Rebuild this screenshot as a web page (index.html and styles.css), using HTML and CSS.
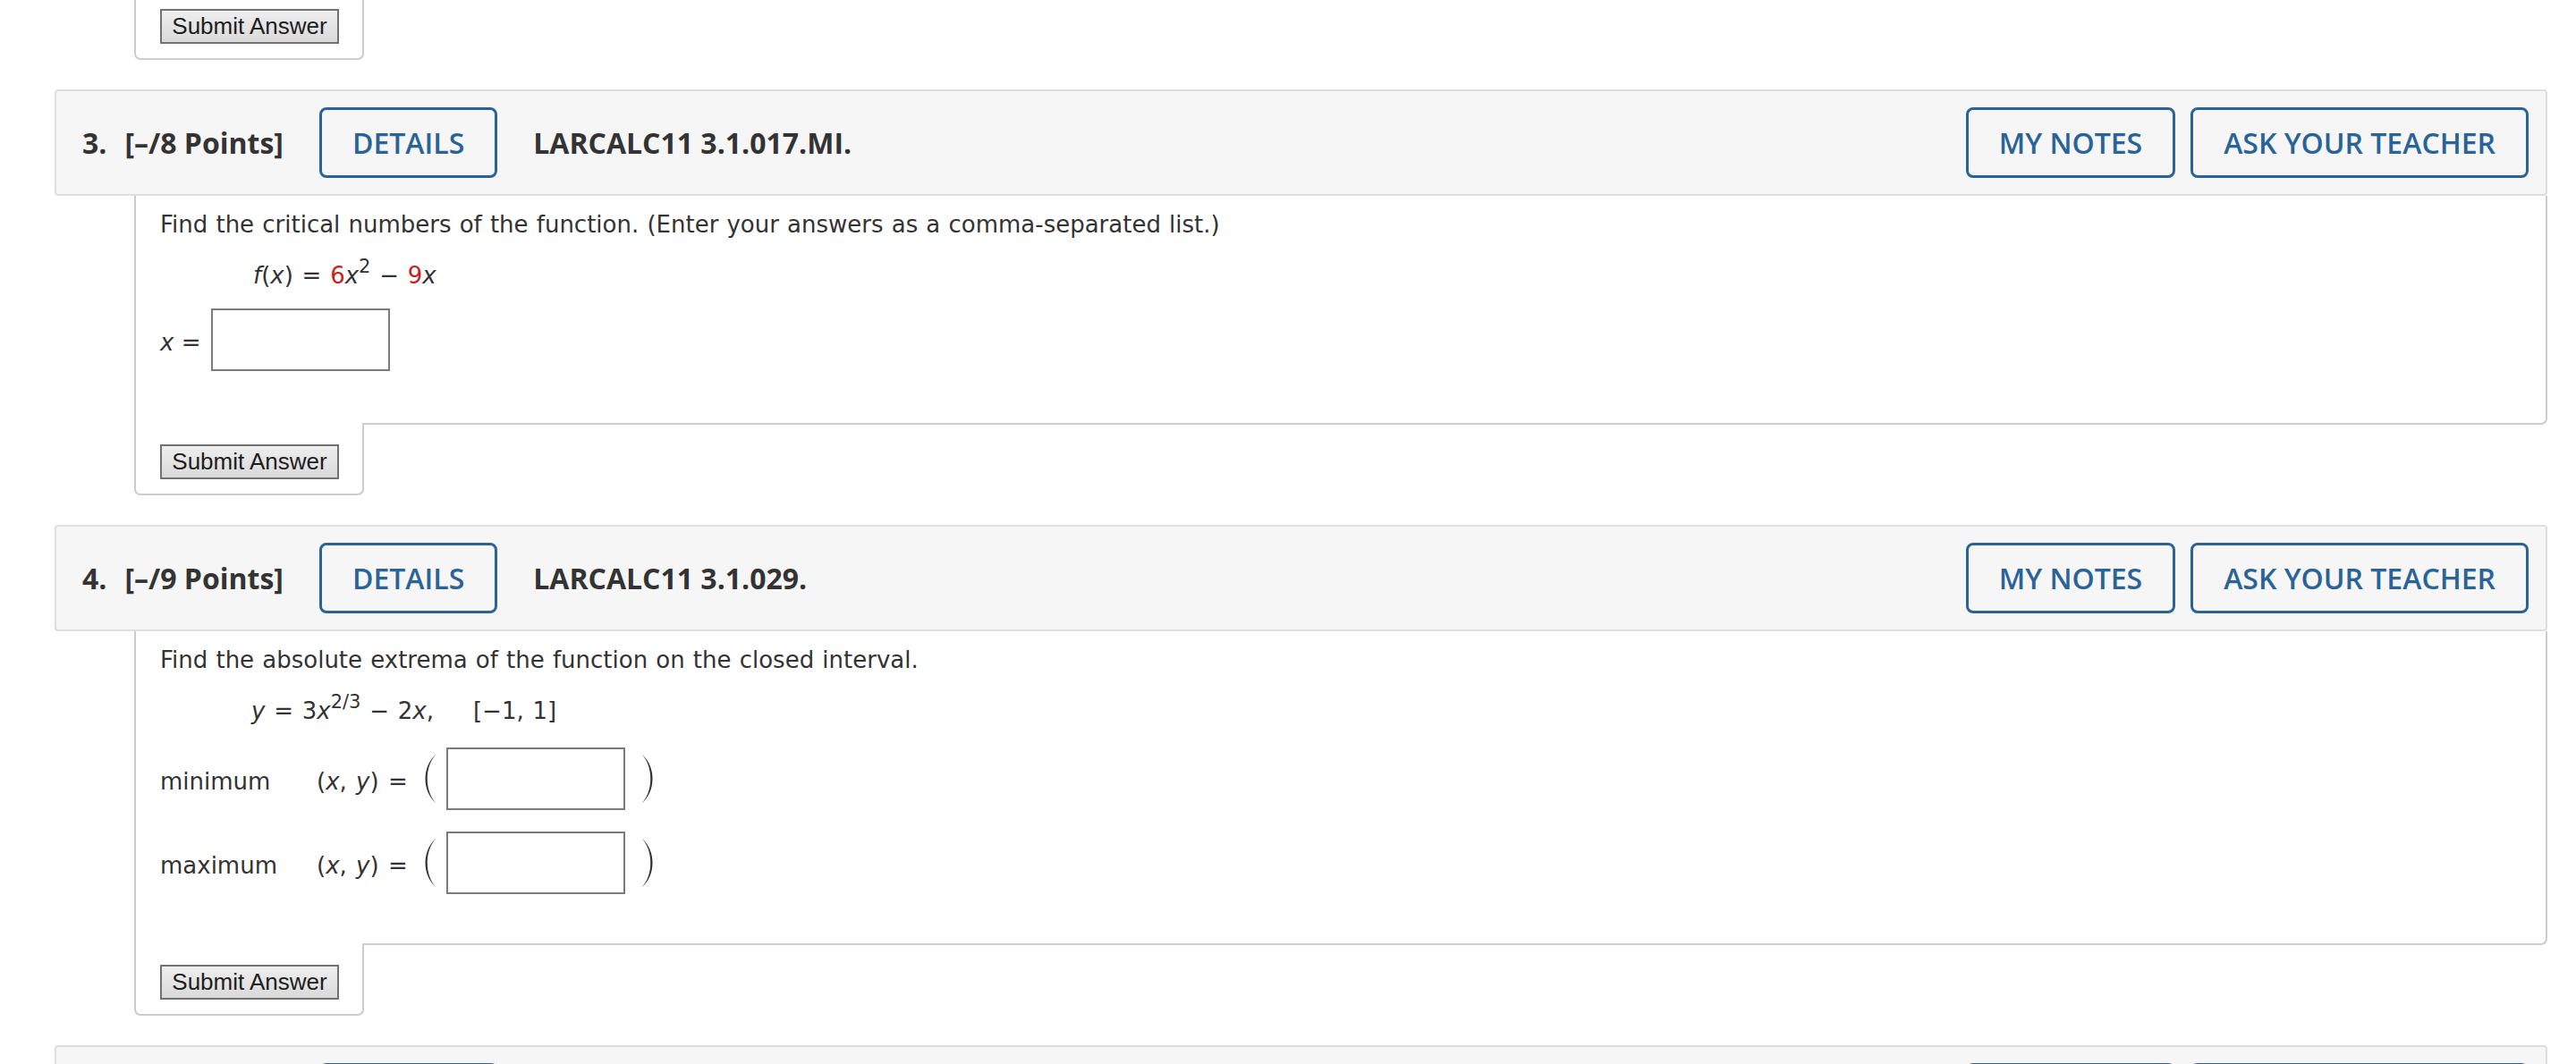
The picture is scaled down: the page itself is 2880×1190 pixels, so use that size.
FILE: index.html
```html
<!DOCTYPE html>
<html lang="en">
<head>
<meta charset="utf-8">
<title>WebAssign</title>
<link rel="stylesheet" href="styles.css">
</head>
<body>
<main class="page">
  <div class="tab tab-first"><button class="submit" type="button">Submit Answer</button></div>

  <section class="question">
    <div class="qhead">
      <span class="qnum">3.</span>
      <span class="qpts">[–/8 Points]</span>
      <button class="btn btn-details" type="button">DETAILS</button>
      <span class="qid">LARCALC11 3.1.017.MI.</span>
      <span class="spacer"></span>
      <button class="btn" type="button">MY NOTES</button>
      <button class="btn" type="button">ASK YOUR TEACHER</button>
    </div>
    <div class="qbody">
      <p class="prompt">Find the critical numbers of the function. (Enter your answers as a comma-separated list.)</p>
      <p class="formula"><i>f</i>(<i>x</i>) = <span class="red">6</span><i>x</i><sup>2</sup> − <span class="red">9</span><i>x</i></p>
      <div class="answer-row">
        <span class="lbl"><i>x</i> =</span>
        <input class="ans" type="text" aria-label="x">
      </div>
    </div>
    <div class="tab"><button class="submit" type="button">Submit Answer</button></div>
  </section>

  <section class="question">
    <div class="qhead">
      <span class="qnum">4.</span>
      <span class="qpts">[–/9 Points]</span>
      <button class="btn btn-details" type="button">DETAILS</button>
      <span class="qid">LARCALC11 3.1.029.</span>
      <span class="spacer"></span>
      <button class="btn" type="button">MY NOTES</button>
      <button class="btn" type="button">ASK YOUR TEACHER</button>
    </div>
    <div class="qbody qbody-short">
      <p class="prompt">Find the absolute extrema of the function on the closed interval.</p>
      <p class="formula formula-wide"><i>y</i> = 3<i>x</i><sup>2/3</sup> − 2<i>x</i>,<span class="interval">[−1, 1]</span></p>
      <div class="pairs">
        <div class="pair">
          <span class="pair-name">minimum</span>
          <span class="pair-xy">(<i>x</i>, <i>y</i>) =</span>
          <svg class="paren" viewBox="0 0 13 56" aria-hidden="true"><path d="M12.5 0.5 C-3.5 14 -3.5 42 12.5 55.5 C-0.5 42 -0.5 14 12.5 0.5Z"/></svg>
          <input class="ans" type="text" aria-label="minimum">
          <svg class="paren paren-r" viewBox="0 0 13 56" aria-hidden="true"><path d="M0.5 0.5 C16.5 14 16.5 42 0.5 55.5 C13.5 42 13.5 14 0.5 0.5Z"/></svg>
        </div>
        <div class="pair">
          <span class="pair-name">maximum</span>
          <span class="pair-xy">(<i>x</i>, <i>y</i>) =</span>
          <svg class="paren" viewBox="0 0 13 56" aria-hidden="true"><path d="M12.5 0.5 C-3.5 14 -3.5 42 12.5 55.5 C-0.5 42 -0.5 14 12.5 0.5Z"/></svg>
          <input class="ans" type="text" aria-label="maximum">
          <svg class="paren paren-r" viewBox="0 0 13 56" aria-hidden="true"><path d="M0.5 0.5 C16.5 14 16.5 42 0.5 55.5 C13.5 42 13.5 14 0.5 0.5Z"/></svg>
        </div>
      </div>
    </div>
    <div class="tab"><button class="submit" type="button">Submit Answer</button></div>
  </section>

  <section class="question">
    <div class="qhead qhead-partial">
      <span class="qnum">5.</span>
      <button class="btn btn-details" type="button">DETAILS</button>
      <span class="spacer"></span>
      <button class="btn" type="button">MY NOTES</button>
      <button class="btn" type="button">ASK YOUR TEACHER</button>
    </div>
  </section>
</main>
</body>
</html>
```

FILE: styles.css
```css
* {
  box-sizing: border-box;
}

html,
body {
  margin: 0;
  padding: 0;
  background: #fff;
}

body {
  font-family: "DejaVu Sans", Verdana, sans-serif;
  color: #333;
}

.page {
  padding: 0 32px 40px 61px;
}

/* Submit tab hanging below each question body */
.tab {
  width: 257px;
  margin: -2px 0 0 89px;
  padding: 24px 0 16px 27px;
  background: #fff;
  border: 2px solid #ccc;
  border-top: 0;
  border-radius: 0 0 7px 7px;
}

.tab-first {
  margin-top: 0;
  padding-top: 10px;
}

.submit {
  display: block;
  width: 200px;
  height: 39px;
  padding: 0;
  border: 2px solid #727272;
  border-radius: 0;
  background: linear-gradient(#efefef, #d9d9d9);
  font-family: "Liberation Sans", Arial, sans-serif;
  font-size: 26px;
  color: #1e1e1e;
}

/* Question header bar */
.qhead {
  display: flex;
  align-items: center;
  margin-top: 33px;
  padding: 18px 19px 18px 29px;
  background: #f6f6f6;
  border: 2px solid #dedede;
  border-radius: 4px;
  font-family: "Open Sans", sans-serif;
  font-size: 32px;
  font-weight: 700;
  color: #333;
  white-space: nowrap;
}

.qpts {
  margin-left: 20px;
}

.btn {
  height: 79px;
  padding: 0 34px;
  border: 3px solid #2a6496;
  border-radius: 8px;
  background: transparent;
  color: #2a6496;
  font-family: "Open Sans", sans-serif;
  font-size: 32px;
  font-weight: 600;
}

.btn-details {
  margin-left: 40px;
}

.qhead-partial .btn-details {
  margin-left: 238px;
}

.qid {
  margin-left: 40px;
}

.spacer {
  flex: 1;
}

.btn + .btn {
  margin-left: 17px;
}

/* Question body */
.qbody {
  margin-left: 89px;
  padding: 14px 27px 58px;
  border: 2px solid #ccc;
  border-top: 0;
  border-radius: 0 0 7px 0;
  font-size: 26px;
  line-height: 36px;
}

.qbody-short {
  padding-bottom: 55px;
}

.qbody p {
  margin: 0;
}

.qbody .prompt {
  word-spacing: 0.9px;
}

.qbody .formula {
  margin: 21px 0 0 104px;
  word-spacing: 1.5px;
}

.qbody .formula-wide {
  margin-left: 102px;
}

.interval {
  margin-left: 44px;
}

.red {
  color: #c8201c;
}

sup {
  font-size: 21px;
  line-height: 0;
  vertical-align: 12px;
}

.answer-row {
  display: flex;
  align-items: center;
  margin-top: 19px;
}

.lbl {
  padding-top: 5px;
}

.ans {
  width: 200px;
  height: 70px;
  margin: 0 0 0 12px;
  padding: 0 8px;
  border: 2px solid #7a7a7a;
  border-radius: 0;
  background: #fff;
  font-family: "DejaVu Sans", Verdana, sans-serif;
  font-size: 26px;
}

.pairs {
  display: flex;
  flex-direction: column;
  gap: 24px;
  margin-top: 23px;
}

.pair {
  display: flex;
  align-items: center;
}

.pair-name {
  width: 175px;
  padding-top: 5px;
}

.pair-xy {
  width: 121px;
  padding-top: 5px;
  word-spacing: 2px;
}

.paren {
  flex: none;
  width: 13px;
  height: 56px;
  fill: #333;
}

.pair .ans {
  margin-left: 11px;
}

.paren-r {
  margin-left: 18px;
}
```
